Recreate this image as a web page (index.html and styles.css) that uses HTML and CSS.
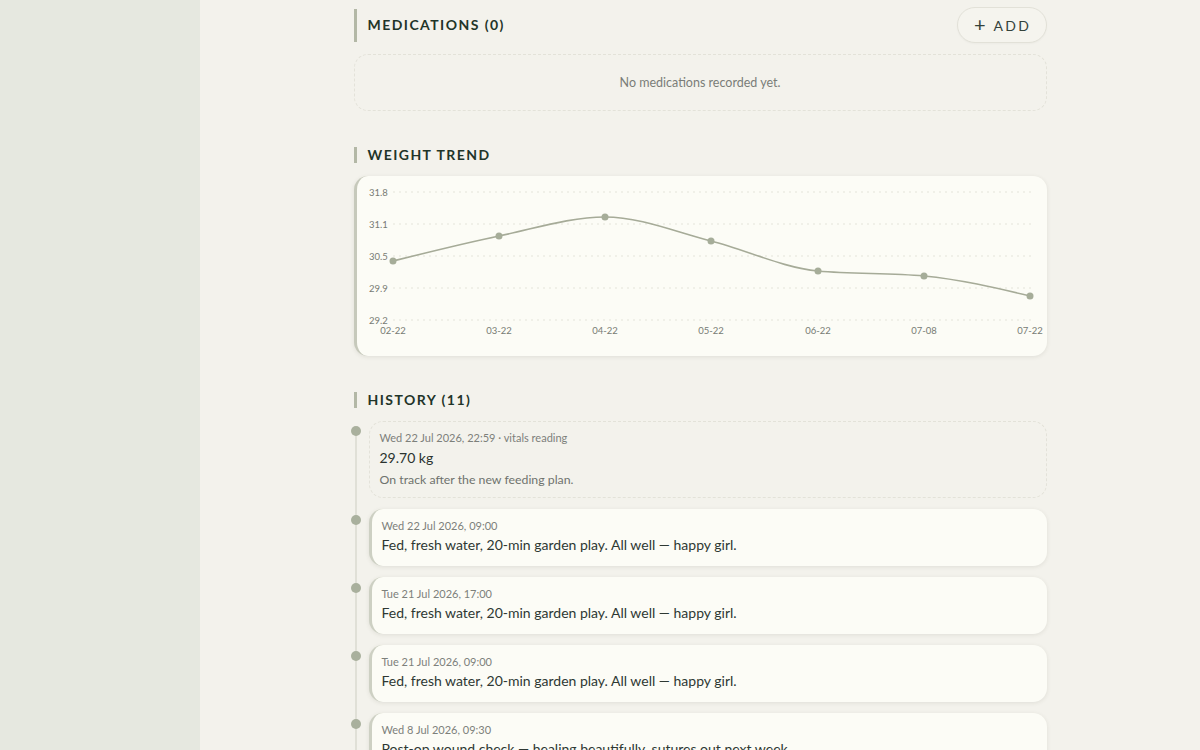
FILE: index.html
```html
<!DOCTYPE html>
<html>
<head>
<meta charset="utf-8">
<link rel="stylesheet" href="styles.css">
</head>
<body>
<aside class="sidebar"></aside>
<main class="main">
  <div class="column">
    <section class="section">
      <div class="section-head">
        <h2 class="heading heading-tall">MEDICATIONS (0)</h2>
        <button class="add-btn"><span class="plus">+</span>ADD</button>
      </div>
      <div class="empty">No medications recorded yet.</div>
    </section>

    <section class="section">
      <h2 class="heading">WEIGHT TREND</h2>
      <div class="chart-card">
        <svg class="chart" width="693" height="180" viewBox="0 0 693 180">
          <g class="grid">
            <line x1="39" y1="16" x2="677" y2="16"/>
            <line x1="39" y1="48" x2="677" y2="48"/>
            <line x1="39" y1="80" x2="677" y2="80"/>
            <line x1="39" y1="112" x2="677" y2="112"/>
            <line x1="39" y1="144" x2="677" y2="144"/>
          </g>
          <g class="ylab">
            <text x="15" y="19.5">31.8</text>
            <text x="15" y="51.5">31.1</text>
            <text x="15" y="83.5">30.5</text>
            <text x="15" y="115.5">29.9</text>
            <text x="15" y="147.5">29.2</text>
          </g>
          <g class="xlab">
            <text x="39" y="157.5">02-22</text>
            <text x="145" y="157.5">03-22</text>
            <text x="251" y="157.5">04-22</text>
            <text x="357" y="157.5">05-22</text>
            <text x="464" y="157.5">06-22</text>
            <text x="570" y="157.5">07-08</text>
            <text x="676" y="157.5">07-22</text>
          </g>
          <path class="line" d="M39,85 C74.4,76.2 109.6,67.4 145,60 C180.4,52.7 215.6,41 251,41 C286.4,41 321.6,56 357,65 C392.4,74 428.6,91.7 464,95 C499.4,98.3 534.6,96.7 570,100 C605.4,103.3 640.6,111.6 676,120"/>
          <g class="dots">
            <circle cx="39" cy="85" r="3.5"/>
            <circle cx="145" cy="60" r="3.5"/>
            <circle cx="251" cy="41" r="3.5"/>
            <circle cx="357" cy="65" r="3.5"/>
            <circle cx="464" cy="95" r="3.5"/>
            <circle cx="570" cy="100" r="3.5"/>
            <circle cx="676" cy="120" r="3.5"/>
          </g>
        </svg>
      </div>
    </section>

    <section class="section">
      <h2 class="heading">HISTORY (11)</h2>
      <div class="timeline">
        <div class="entry entry-reading">
          <div class="entry-date">Wed 22 Jul 2026, 22:59 · vitals reading</div>
          <div class="entry-value">29.70 kg</div>
          <div class="entry-note">On track after the new feeding plan.</div>
        </div>
        <div class="entry">
          <div class="entry-date">Wed 22 Jul 2026, 09:00</div>
          <div class="entry-text">Fed, fresh water, 20-min garden play. All well — happy girl.</div>
        </div>
        <div class="entry">
          <div class="entry-date">Tue 21 Jul 2026, 17:00</div>
          <div class="entry-text">Fed, fresh water, 20-min garden play. All well — happy girl.</div>
        </div>
        <div class="entry">
          <div class="entry-date">Tue 21 Jul 2026, 09:00</div>
          <div class="entry-text">Fed, fresh water, 20-min garden play. All well — happy girl.</div>
        </div>
        <div class="entry">
          <div class="entry-date">Wed 8 Jul 2026, 09:30</div>
          <div class="entry-text">Post-op wound check — healing beautifully, sutures out next week.</div>
        </div>
      </div>
    </section>
  </div>
</main>
</body>
</html>
```

FILE: styles.css
```css
* { box-sizing: border-box; }
html, body { margin: 0; height: 100%; }
body {
  display: flex;
  font-family: "Lato", "Noto Sans", sans-serif;
  background: #f3f2ec;
  color: #2e3833;
  overflow: hidden;
}
.sidebar {
  width: 200px;
  flex: 0 0 200px;
  height: 750px;
  background: #e6e8e0;
}
.main {
  flex: 1;
  height: 750px;
  overflow: hidden;
}
.column {
  width: 693px;
  margin: 0 auto;
  padding-top: 7px;
}
.section { margin-bottom: 36px; }
.section-head {
  display: flex;
  align-items: center;
  justify-content: space-between;
  margin-bottom: 11px;
}
.heading {
  margin: 0 0 13px;
  border-left: 3px solid #b3b8a6;
  padding-left: 11px;
  font-size: 14px;
  line-height: 16px;
  font-weight: 700;
  letter-spacing: 1.45px;
  color: #1f3529;
}
.heading-tall {
  margin: 0;
  padding-top: 8px;
  padding-bottom: 9px;
}
.add-btn {
  height: 36px;
  width: 90px;
  border: 1px solid #e2e1d8;
  border-radius: 18px;
  background: #f5f4ee;
  font-family: inherit;
  font-size: 14px;
  letter-spacing: 2.2px;
  color: #34423a;
  display: flex;
  align-items: center;
  justify-content: center;
  padding: 0 0 0 2px;
  box-shadow: 0 1px 2px rgba(0,0,0,0.03);
}
.plus {
  font-size: 20px;
  font-weight: 400;
  margin-right: 8px;
  letter-spacing: 0;
  line-height: 1;
  position: relative;
  top: -1px;
}
.empty {
  height: 57px;
  border: 1px dashed #e3e2d9;
  border-radius: 14px;
  display: flex;
  align-items: center;
  justify-content: center;
  font-size: 12.5px;
  color: #7a7d78;
}
.chart-card {
  height: 180px;
  background: #fcfcf6;
  border-radius: 14px;
  border-left: 3px solid #c6c9bb;
  box-shadow: 0 1px 4px rgba(60,60,40,0.10);
  overflow: hidden;
  position: relative;
}
.chart {
  display: block;
  margin-left: -3px;
}
.grid line {
  stroke: #e4e4da;
  stroke-width: 1;
  stroke-dasharray: 2 4;
}
.ylab text {
  font-size: 9.5px;
  fill: #777b74;
  font-family: "Lato", "Noto Sans", sans-serif;
}
.xlab text {
  font-size: 9.5px;
  fill: #777b74;
  text-anchor: middle;
  font-family: "Lato", "Noto Sans", sans-serif;
}
.line {
  fill: none;
  stroke: #a6ab98;
  stroke-width: 1.6;
}
.dots circle { fill: #a6ad99; }

.timeline {
  position: relative;
  padding-left: 15px;
  display: flex;
  flex-direction: column;
  gap: 11px;
}
.timeline::before {
  content: "";
  position: absolute;
  left: 1px;
  top: 8px;
  bottom: 0;
  width: 2px;
  background: #e0e0d7;
}
.entry {
  position: relative;
  background: #fcfcf6;
  border-radius: 14px;
  border-left: 3px solid #cdd0c3;
  box-shadow: 0 1px 4px rgba(60,60,40,0.10);
  padding: 10px 10px 8px 10px;
  min-height: 57px;
}
.entry::before {
  content: "";
  position: absolute;
  left: -21px;
  top: 6px;
  width: 10px;
  height: 10px;
  border-radius: 50%;
  background: #a9b09d;
}
.entry-reading {
  background: transparent;
  border: 1px dashed #e3e2d9;
  box-shadow: none;
  padding: 9px 10px 9px 10px;
  min-height: 77px;
}
.entry-reading::before { left: -19px; top: 4px; }
.entry-date {
  font-size: 11px;
  line-height: 14px;
  color: #7d807b;
}
.entry-value {
  font-size: 14px;
  line-height: 20px;
  margin-top: 3px;
  color: #2a332f;
}
.entry-note {
  font-size: 12.3px;
  line-height: 17px;
  margin-top: 3px;
  color: #6f736e;
}
.entry-text {
  font-size: 14px;
  line-height: 20px;
  margin-top: 2px;
  color: #2e3833;
}
```
